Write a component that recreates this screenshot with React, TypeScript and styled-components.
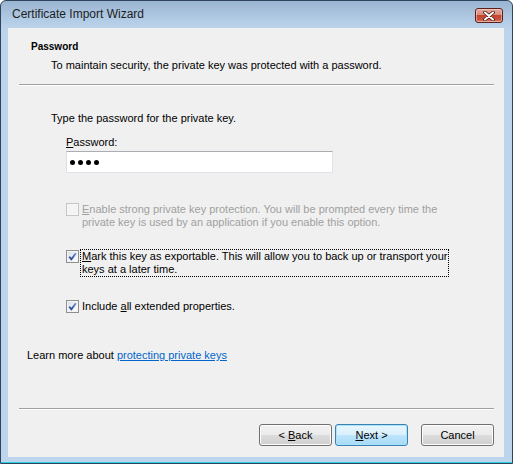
import React from "react";
import styled, { createGlobalStyle } from "styled-components";

const Global = createGlobalStyle`
  html, body { margin: 0; padding: 0; background: #ffffff; }
  body { font-family: "Liberation Sans", Arial, sans-serif; }
`;

const Window = styled.div`
  box-sizing: border-box;
  width: 513px;
  height: 464px;
  display: flex;
  flex-direction: column;
  border: 1px solid #30435c;
  border-radius: 6px 6px 0 0;
  background: linear-gradient(to bottom, #9ab5d2 0px, #b4cde6 20px, #bdd5ec 30px, #bdd5ec 100%);
  padding: 0 8px 6px 7px;
  box-shadow: inset 0 -1px 0 #2ad0e0;
`;

const TitleBar = styled.div`
  height: 27px;
  display: flex;
  align-items: center;
  justify-content: space-between;
  padding: 0 1px 0 4px;
`;

const Title = styled.span`
  font-family: "Liberation Sans", Arial, sans-serif;
  font-size: 12px;
  color: #1e1e1e;
  margin-top: -1px;
`;

const CloseButton = styled.div`
  box-sizing: border-box;
  width: 28px;
  height: 15px;
  margin-top: 2px;
  border: 1px solid #5b2119;
  border-radius: 3px;
  background: linear-gradient(to bottom, #e6aaa0 0%, #d98a7c 45%, #c4452f 50%, #c65240 80%, #da8a6f 100%);
  box-shadow: inset 0 0 0 1px rgba(255, 220, 210, 0.5);
  display: flex;
  align-items: center;
  justify-content: center;
`;

const Client = styled.div`
  flex: 1;
  background: #f0f0f0;
  display: flex;
  flex-direction: column;
  font-family: "Liberation Sans", Arial, sans-serif;
  font-size: 11px;
  color: #000;
`;

const Header = styled.div`
  padding: 12px 0 0 23px;
  height: 45px;
  box-sizing: border-box;
`;

const HeaderTitle = styled.div`
  font-weight: bold;
  font-size: 10px;
  line-height: 13px;
`;

const HeaderText = styled.div`
  margin: 6px 0 0 20px;
  line-height: 13px;
`;

const Separator = styled.div<{ $top: number }>`
  height: 1px;
  margin: ${(p) => p.$top}px 10px 0 11px;
  background: #a0a0a0;
  border-bottom: 1px solid #ffffff;
`;

const Body = styled.div`
  padding: 26px 0 0 43px;
  display: flex;
  flex-direction: column;
`;

const Text = styled.div`
  line-height: 13px;
`;

const Indented = styled.div`
  margin-left: 15px;
  display: flex;
  flex-direction: column;
`;

const FieldLabel = styled.div`
  margin-top: 11px;
  line-height: 13px;
`;

const PasswordBox = styled.div`
  box-sizing: border-box;
  margin-top: 2px;
  width: 267px;
  height: 22px;
  background: #ffffff;
  border: 1px solid #e2e3ea;
  border-top-color: #abadb3;
  border-left-color: #dbdfe6;
  display: flex;
  align-items: center;
  gap: 3px;
  padding-left: 3px;
`;

const Dot = styled.span`
  width: 5px;
  height: 5px;
  border-radius: 50%;
  background: #000;
`;

const CheckRow = styled.div<{ $top: number; $disabled?: boolean }>`
  margin-top: ${(p) => p.$top}px;
  display: flex;
  align-items: flex-start;
  color: ${(p) => (p.$disabled ? "#a0a0a0" : "#000")};
`;

const Box = styled.span<{ $disabled?: boolean }>`
  box-sizing: border-box;
  flex: none;
  width: 13px;
  height: 13px;
  border: 1px solid ${(p) => (p.$disabled ? "#c6c6c6" : "#8e8f8f")};
  background: ${(p) =>
    p.$disabled
      ? "#f4f4f4"
      : "linear-gradient(135deg, #d6dbe4 0%, #eef0f4 50%, #ffffff 100%)"};
  box-shadow: inset 0 0 0 1px ${(p) => (p.$disabled ? "#f7f7f7" : "#f4f4f4")};
  display: flex;
  align-items: center;
  justify-content: center;
`;

const CheckLabel = styled.span<{ $focused?: boolean }>`
  margin-left: 2px;
  line-height: 13px;
  padding: 0 1px;
  outline: ${(p) => (p.$focused ? "1px dotted #000" : "none")};
  outline-offset: 0px;
`;

const Link = styled.a`
  color: #0066cc;
  text-decoration: underline;
  cursor: pointer;
`;

const Learn = styled.div`
  margin: 36px 0 0 19px;
  line-height: 13px;
`;

const Spacer = styled.div`
  flex: 1;
`;

const ButtonRow = styled.div`
  display: flex;
  justify-content: flex-end;
  padding: 14px 10px 11px 0;
`;

const Button = styled.div<{ $default?: boolean; $gap?: number }>`
  box-sizing: border-box;
  width: 73px;
  height: 22px;
  margin-left: ${(p) => p.$gap ?? 0}px;
  border: 1px solid ${(p) => (p.$default ? "#3c7fb1" : "#707070")};
  border-radius: 3px;
  background: ${(p) =>
    p.$default
      ? "linear-gradient(to bottom, #eaf6fd 0%, #d9f0fc 50%, #bee6fd 50%, #a7d9f5 100%)"
      : "linear-gradient(to bottom, #f2f2f2 0%, #ebebeb 50%, #dddddd 50%, #cfcfcf 100%)"};
  box-shadow: inset 0 0 0 1px ${(p) => (p.$default ? "#a8e4fb" : "#fcfcfc")};
  display: flex;
  align-items: center;
  justify-content: center;
  font-size: 11px;
  color: #000;
`;

const ButtonText = styled.span`
  white-space: pre;
`;

const U = styled.span`
  text-decoration: underline;
`;

const Check = () => (
  <svg width="9" height="9" viewBox="0 0 9 9">
    <defs>
      <linearGradient id="chk" x1="0" y1="0" x2="0" y2="1">
        <stop offset="0" stopColor="#6f8fd4" />
        <stop offset="1" stopColor="#2a4a98" />
      </linearGradient>
    </defs>
    <path d="M1.2 4.6 L3.4 7.2 L7.8 1.2" stroke="url(#chk)" strokeWidth="1.9" fill="none" />
  </svg>
);

const CloseX = () => (
  <svg width="14" height="10" viewBox="0 0 14 10">
    <path d="M3 1.5 L11 8.5 M11 1.5 L3 8.5" stroke="#4a1a12" strokeWidth="3.6" strokeLinecap="round" />
    <path d="M3 1.5 L11 8.5 M11 1.5 L3 8.5" stroke="#ffffff" strokeWidth="2" strokeLinecap="round" />
  </svg>
);

export default function App() {
  return (
    <>
      <Global />
      <Window>
        <TitleBar>
          <Title>Certificate Import Wizard</Title>
          <CloseButton>
            <CloseX />
          </CloseButton>
        </TitleBar>
        <Client>
          <Header>
            <HeaderTitle>Password</HeaderTitle>
            <HeaderText>To maintain security, the private key was protected with a password.</HeaderText>
          </Header>
          <Separator $top={11} />
          <Body>
            <Text>Type the password for the private key.</Text>
            <Indented>
              <FieldLabel>
                <U>P</U>assword:
              </FieldLabel>
              <PasswordBox>
                <Dot />
                <Dot />
                <Dot />
                <Dot />
              </PasswordBox>
              <CheckRow $top={30} $disabled>
                <Box $disabled />
                <CheckLabel>
                  <U>E</U>nable strong private key protection. You will be prompted every time the
                  <br />
                  private key is used by an application if you enable this option.
                </CheckLabel>
              </CheckRow>
              <CheckRow $top={21}>
                <Box>
                  <Check />
                </Box>
                <CheckLabel $focused>
                  <U>M</U>ark this key as exportable. This will allow you to back up or transport your
                  <br />
                  keys at a later time.
                </CheckLabel>
              </CheckRow>
              <CheckRow $top={24}>
                <Box>
                  <Check />
                </Box>
                <CheckLabel>
                  Include <U>a</U>ll extended properties.
                </CheckLabel>
              </CheckRow>
            </Indented>
          </Body>
          <Learn>
            Learn more about <Link>protecting private keys</Link>
          </Learn>
          <Spacer />
          <Separator $top={0} />
          <ButtonRow>
            <Button>
              <ButtonText>
                {"< "}
                <U>B</U>ack
              </ButtonText>
            </Button>
            <Button $default $gap={3}>
              <ButtonText>
                <U>N</U>ext {">"}
              </ButtonText>
            </Button>
            <Button $gap={13}>
              <ButtonText>Cancel</ButtonText>
            </Button>
          </ButtonRow>
        </Client>
      </Window>
    </>
  );
}
